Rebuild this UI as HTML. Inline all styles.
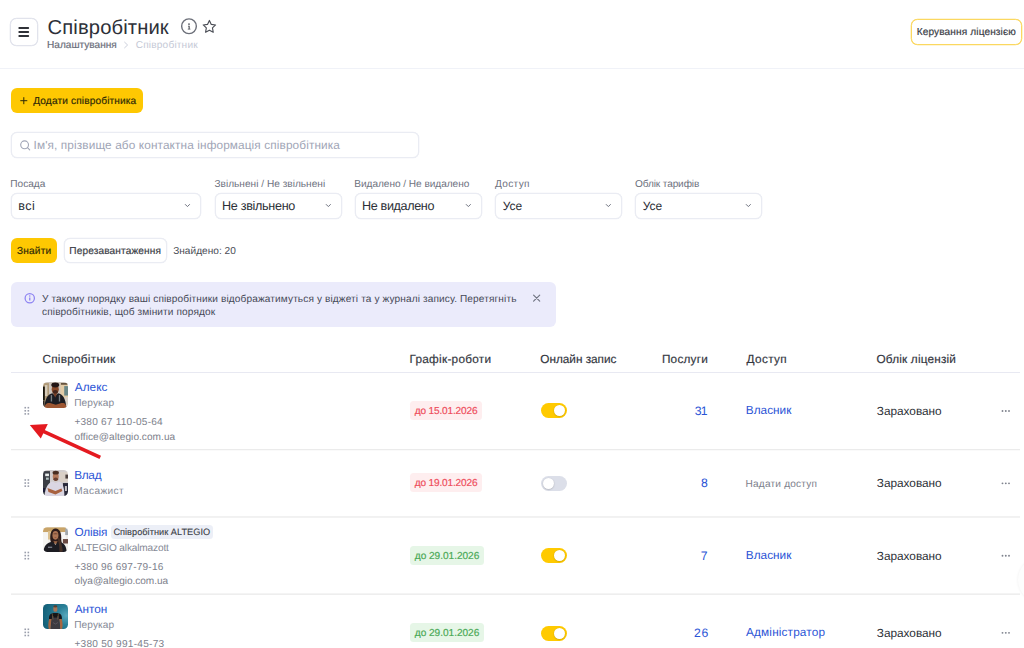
<!DOCTYPE html>
<html lang="uk"><head><meta charset="utf-8"><title>Співробітник</title>
<style>
*{box-sizing:border-box;margin:0;padding:0}
html,body{width:1024px;height:648px;overflow:hidden;background:#fff}
body{font-family:"Liberation Sans",sans-serif;text-rendering:geometricPrecision;color:#2c2f36;position:relative}
.a{position:absolute}
.t{position:absolute;white-space:nowrap;line-height:20px}
.box{position:absolute;color:#eaecf3;border:1px solid currentColor;box-shadow:0 0 0 .3px currentColor;border-radius:6px;background:#fff}
.line{position:absolute;left:11px;width:1009px;height:1px;background:#e9eaf1}
.badge{position:absolute;left:410.3px;height:19.2px;border-radius:3.5px}
.red{background:#feeeef}.green{background:#e6f6e7}
.tog{position:absolute;left:541px;width:25.5px;height:15px;border-radius:7.5px}
.tog.on{background:#ffca00}.tog.off{background:#dcdfe9}
.tog i{position:absolute;top:1.95px;width:11.1px;height:11.1px;border-radius:50%;background:#fff;box-shadow:0 0.5px 1.5px rgba(0,0,0,.25)}
.tog.on i{left:12.65px}.tog.off i{left:1.5px}
.av{position:absolute;left:42.8px;width:25.4px;height:25.6px;border-radius:4.5px;overflow:hidden}
.av svg{display:block}
</style></head><body>
<!-- header -->
<div class="box" style="left:10px;top:18px;width:28px;height:28px;color:#e1e3ec;border-radius:6.5px"></div>
<svg class="a" style="left:10px;top:18px" width="28" height="28" viewBox="0 0 28 28"><g fill="#2f3137"><rect x="8.4" y="9.05" width="10.7" height="1.9" rx=".8"/><rect x="8.4" y="13.05" width="10.7" height="1.9" rx=".8"/><rect x="8.4" y="17.05" width="10.7" height="1.9" rx=".8"/></g></svg>
<svg class="a" style="left:178px;top:16px" width="44" height="22" viewBox="178 16 44 22"><circle cx="189" cy="26.25" r="7.35" fill="none" stroke="#6c6f79" stroke-width="1.4"/><path d="M188 25.7h1.7v3h.7v.8h-2.6v-.8h.8v-2.2h-.6z" fill="#4a4d55"/><circle cx="189" cy="24.1" r=".85" fill="#4a4d55"/><path d="M209.4 20.4l1.9 4 4.3.55-3.15 3 .8 4.3-3.85-2.1-3.85 2.1.8-4.3-3.15-3 4.3-.55z" fill="none" stroke="#4a4d55" stroke-width="1.15" stroke-linejoin="round"/></svg>
<svg class="a" style="left:122px;top:40px" width="8" height="10" viewBox="0 0 8 10"><path d="M2.6 2.2L5.6 5 2.6 7.8" fill="none" stroke="#ccd0dc" stroke-width="1" stroke-linecap="round" stroke-linejoin="round"/></svg>
<div class="box" style="left:911px;top:19px;width:110.5px;height:25.5px;color:#fbd860;border-radius:6.5px"></div>
<div class="a" style="left:0;top:68px;width:1024px;height:1px;background:#f0f2f8"></div>

<!-- add button -->
<div class="a" style="left:11px;top:87.8px;width:132.3px;height:25.4px;border-radius:6px;background:#fec802"></div>
<svg class="a" style="left:19px;top:96px" width="10" height="10" viewBox="0 0 10 10"><path d="M4.8 1.6v6.2M1.7 4.7h6.2" stroke="#2e2a08" stroke-width="1" stroke-linecap="round"/></svg>

<!-- search -->
<div class="box" style="left:11px;top:132px;width:407.5px;height:25.8px"></div>
<svg class="a" style="left:18px;top:138px" width="14" height="14" viewBox="18 138 14 14"><circle cx="24.6" cy="144.8" r="3.9" fill="none" stroke="#a0a5b6" stroke-width="1.1"/><path d="M27.5 147.7l2.2 2.2" stroke="#a0a5b6" stroke-width="1.1" stroke-linecap="round"/></svg>

<!-- selects -->
<div class="box" style="left:11px;top:193.1px;width:190.4px;height:25.6px"></div>
<div class="box" style="left:215px;top:193.1px;width:127.3px;height:25.6px"></div>
<div class="box" style="left:355px;top:193.1px;width:127.3px;height:25.6px"></div>
<div class="box" style="left:495px;top:193.1px;width:127.3px;height:25.6px"></div>
<div class="box" style="left:635px;top:193.1px;width:127.3px;height:25.6px"></div>
<svg class="a" style="left:0;top:193px" width="1024" height="26" viewBox="0 193 1024 26"><g fill="none" stroke="#6f7380" stroke-width="1" stroke-linecap="round" stroke-linejoin="round"><path d="M185.35 204.5l2.1 2.1 2.1-2.1"/><path d="M326.25 204.5l2.1 2.1 2.1-2.1"/><path d="M466.25 204.5l2.1 2.1 2.1-2.1"/><path d="M606.25 204.5l2.1 2.1 2.1-2.1"/><path d="M746.25 204.5l2.1 2.1 2.1-2.1"/></g></svg>

<!-- buttons -->
<div class="a" style="left:11px;top:237.5px;width:46px;height:25.5px;border-radius:6px;background:#fec802"></div>
<div class="box" style="left:64px;top:237.5px;width:102.5px;height:25.5px"></div>

<!-- info -->
<div class="a" style="left:11px;top:282px;width:544.5px;height:44.8px;border-radius:6px;background:#ebebfb"></div>
<svg class="a" style="left:23px;top:292px" width="14" height="14" viewBox="23 292 14 14"><circle cx="29.75" cy="298.25" r="4.65" fill="none" stroke="#8d83f2" stroke-width="1.25"/><rect x="29.1" y="297.5" width="1.3" height="3" fill="#8d83f2"/><circle cx="29.75" cy="296" r=".75" fill="#8d83f2"/></svg>
<svg class="a" style="left:531px;top:293px" width="12" height="12" viewBox="531 293 12 12"><path d="M533.6 295.1l6.1 6.1M539.7 295.1l-6.1 6.1" stroke="#6f7380" stroke-width="1.15" stroke-linecap="round"/></svg>

<!-- table lines -->
<div class="line" style="top:372px;background:#e8e9f2"></div>
<div class="line" style="top:449px;background:#ebebeb"></div><div class="line" style="top:450px;background:#fafafa"></div>
<div class="line" style="top:516px;background:#f1f1f1"></div><div class="line" style="top:517px;background:#f2f2f2"></div>
<div class="line" style="top:593px;background:#f4f4f4"></div><div class="line" style="top:594px;background:#eeeeee"></div>

<!-- badges / toggles -->
<div class="badge red" style="top:401.25px;width:72.2px"></div>
<div class="badge red" style="top:473.3px;width:71.8px"></div>
<div class="badge green" style="top:545.7px;width:74.1px"></div>
<div class="badge green" style="top:623px;width:74.1px"></div>
<div class="tog on" style="top:403.1px"><i></i></div>
<div class="tog off" style="top:475.9px"><i></i></div>
<div class="tog on" style="top:548.3px"><i></i></div>
<div class="tog on" style="top:625.65px"><i></i></div>
<!-- tag -->
<div class="a" style="left:110.6px;top:524.7px;width:102.4px;height:14.3px;border-radius:3.5px;background:#eceff7"></div>

<!-- dots & grips -->
<svg class="a" style="left:0;top:370px" width="1024" height="278" viewBox="0 370 1024 278">
<g fill="#7f838e"><g id="d3"><circle cx="1002.5" cy="410.95" r=".95"/><circle cx="1005.8" cy="410.95" r=".95"/><circle cx="1009" cy="410.95" r=".95"/></g><use href="#d3" y="72.4"/><use href="#d3" y="144.8"/><use href="#d3" y="221.9"/></g>
<g fill="#9a9eab"><g id="gr"><rect x="24.45" y="406.90" width="1.6" height="1.6"/><rect x="27.55" y="406.90" width="1.6" height="1.6"/><rect x="24.45" y="410.00" width="1.6" height="1.6"/><rect x="27.55" y="410.00" width="1.6" height="1.6"/><rect x="24.45" y="413.10" width="1.6" height="1.6"/><rect x="27.55" y="413.10" width="1.6" height="1.6"/></g><use href="#gr" y="72.25"/><use href="#gr" y="144.8"/><use href="#gr" y="221.6"/></g>
<!-- arrow -->
<path d="M29.8 425.1L47.8 424.1L40.8 438.4Z" fill="#e41a20"/>
<path d="M43.6 429.6L101.0 455.7L99.5 458.9L42.1 432.8Z" fill="#e41a20"/>
</svg>

<!-- avatars -->
<div class="av" style="top:382.3px"><svg width="25.4" height="25.6" viewBox="0 0 25.5 25.5"><defs><filter id="bl" x="-10%" y="-10%" width="120%" height="120%"><feGaussianBlur stdDeviation="0.55"/></filter></defs><g filter="url(#bl)"><rect x="-3" y="-3" width="32" height="32" fill="#cdc5bd"/><rect x="-3" y="1" width="9" height="27" fill="#b09a78"/><rect x="-3" y="4.500" width="4.800" height="14" fill="#17140f"/><rect x="2" y="3" width="2.400" height="11" fill="#d6ccba"/><rect x="-3" y="19" width="4.500" height="8" fill="#2a2420"/><rect x="17.500" y="1.500" width="11" height="15" fill="#e2cba6"/><rect x="21.300" y="4" width="6" height="9.500" fill="#6b8888"/><rect x="18" y="1" width="9" height="1.600" fill="#5a4632"/><rect x="22" y="15" width="6" height="12" fill="#d8d0c6"/><ellipse cx="12.300" cy="7.200" rx="3.600" ry="4.700" fill="#87492c"/><ellipse cx="12.300" cy="2.800" rx="4" ry="2.500" fill="#231915"/><ellipse cx="12.300" cy="10" rx="2.700" ry="2.100" fill="#45261a"/><path d="M1.500 26c.3-9.500 3.500-14 8-14.800l2.800 2.500 2.800-2.500c4.500.8 8 5.300 8.300 14.800z" fill="#1e1f24"/><path d="M10.300 11.500l2 4 2-4z" fill="#7a4128"/><rect x="7.800" y="13" width="1.300" height="6.500" fill="#777b82"/><rect x="15.900" y="13" width="1.300" height="6.500" fill="#777b82"/><path d="M1.500 27c0-4.500 2-6.300 5.500-6l5.800 1.800 5.800-1.800c3.500-.3 5 1.500 5 6z" fill="#9d5633"/></g></svg></div>
<div class="av" style="top:470.2px"><svg width="25.4" height="25.6" viewBox="0 0 25.5 25.5"><g filter="url(#bl)"><rect x="-2" y="-2" width="30" height="30" fill="#d2cdcd"/><rect x="-2" y="1" width="9" height="26" fill="#3a3e44"/><rect x="2.2" y="3.5" width="3.8" height="2.6" fill="#e8ebea"/><rect x="3" y="7.5" width="2.8" height="2.2" fill="#b5c4c4"/><rect x="-2" y="18" width="4" height="4" fill="#1c1e3a"/><rect x="17" y="2" width="10" height="10" fill="#d9cfc6"/><rect x="22.5" y="4.5" width="3" height="4" fill="#4a3e3c"/><rect x="20" y="13" width="6" height="13" fill="#2a2a3a"/><rect x="22" y="16" width="2" height="5" fill="#c9c6c8"/><ellipse cx="12.8" cy="6.5" rx="3" ry="4" fill="#b57a5c"/><ellipse cx="12.8" cy="2.6" rx="3.2" ry="1.9" fill="#4a2e22"/><ellipse cx="12.8" cy="9.2" rx="2.3" ry="1.7" fill="#6b4030"/><path d="M1.5 26c1-9 4-13.5 8-14.5l3.3 1.5 3.2-1.5c4 1 5.5 6 5.5 14.500z" fill="#dad6e2"/><path d="M4.500 18l8 3 6-2.500 1 2.500-7 3.500-7-2.500z" fill="#a8623f"/></g></svg></div>
<div class="av" style="top:526.8px"><svg width="25.4" height="25.6" viewBox="0 0 25.5 25.5"><g filter="url(#bl)"><rect x="-3" y="-3" width="32" height="32" fill="#f0ede8"/><rect x="-3" y="0.300" width="26" height="4.700" fill="#c9a468"/><rect x="5" y="4" width="2.800" height="8.500" fill="#dcc190"/><rect x="-3" y="5.200" width="8" height="16" fill="#f5f4f1"/><rect x="18.500" y="5" width="4.500" height="8" fill="#f7f6f4"/><rect x="22.300" y="1.500" width="5" height="6.500" fill="#a3a8ac"/><rect x="20" y="12" width="7" height="4.500" fill="#6b4a42"/><path d="M7.600 14.500c-1.200-8 .8-13 5-13.200 4.500.2 6.200 5 5.700 11.500l1.800 11.700h-4.600l-2.400-8.500-2.500 1z" fill="#2e1f1a"/><ellipse cx="12.500" cy="8.300" rx="3" ry="4.400" fill="#ad7555"/><ellipse cx="12.500" cy="6.700" rx="2.300" ry=".5" fill="#6a4030"/><ellipse cx="12.500" cy="10.600" rx="1.100" ry=".45" fill="#8a4a3a"/><path d="M.3 26c.2-6.500 3.200-10.300 8.700-11.300l3.600 3 3.400-3c5.500 1 7.700 4.800 7.900 11.300z" fill="#1b1c24"/><path d="M10.400 14.200l2.200 3.300 2.100-3.300z" fill="#a06a4a"/><path d="M15.600 10c2 3 3.800 8 4.300 14.500l-3.400.5c0-6-.8-10-1.800-13z" fill="#463028"/><rect x="5" y="19.700" width="4.200" height="1" fill="#9a9ea8"/></g></svg></div>
<div class="av" style="top:603.8px"><svg width="25.4" height="25.6" viewBox="0 0 25.5 25.5"><defs><radialGradient id="tg" cx="0.85" cy="0.45" r="0.9"><stop offset="0" stop-color="#5aa9bd"/><stop offset="0.35" stop-color="#2a7f97"/><stop offset="1" stop-color="#0f5a72"/></radialGradient></defs><g filter="url(#bl)"><rect x="-2" y="-2" width="30" height="30" fill="url(#tg)"/><ellipse cx="12.400" cy="4.800" rx="2.100" ry="3" fill="#a87658"/><ellipse cx="12.400" cy="2.300" rx="2" ry="1.100" fill="#5a4030"/><path d="M6 13.500c0-3 2-4.300 4.500-4.600h4c2.500.3 4.500 1.600 4.500 4.600v2h-2.500v10.500h-8v-10.500h-2.500z" fill="#17181c"/><path d="M6.200 15c-1 4-1.200 7-.2 10.500h1.800c-.3-4 .5-6.500 1-10.500z" fill="#a8653f"/><path d="M18.800 15c1 4 1.200 7 .2 10.500h-1.800c.3-4-.5-6.500-1-10.500z" fill="#a8653f"/><path d="M9.200 12h6.500l1 8 .5 6h-9.500l.5-6z" fill="#3e3a40"/><rect x="10.500" y="10.500" width="4" height="3" fill="#121316"/><path d="M9.300 9.500l.8 6M15.500 9.500l-.8 6" stroke="#8a6a3a" stroke-width=".6" fill="none"/><path d="M10 18.500l2.500 1.500 2.500-1.500" stroke="#6a666c" stroke-width=".6" fill="none"/></g></svg></div>

<!-- fab (mostly offscreen) -->
<div class="a fab" style="left:1018px;top:557px;width:46px;height:46px;border-radius:50%;background:#fdfdfd;box-shadow:0 0 3px rgba(0,0,0,.07)"></div>

<!-- text -->
<div class="t" id="t0" style="left:47.60px;top:18.00px;font-size:20.2px;letter-spacing:0.123px;color:#2d3038;">Співробітник</div>
<div class="t" id="t1" style="left:47.04px;top:36.00px;font-size:10.1px;letter-spacing:0.001px;color:#6a6e7a;-webkit-text-stroke:0.18px #6a6e7a;">Налаштування</div>
<div class="t" id="t2" style="left:135.73px;top:36.00px;font-size:10.1px;letter-spacing:0.185px;color:#c5c9d6;">Співробітник</div>
<div class="t" id="t3" style="left:916.74px;top:23.00px;font-size:10.1px;letter-spacing:0.120px;color:#3a3d46;-webkit-text-stroke:0.18px #3a3d46;">Керування ліцензією</div>
<div class="t" id="t4" style="left:33.20px;top:92.00px;font-size:10.1px;letter-spacing:0.153px;color:#2e2a08;-webkit-text-stroke:0.18px #2e2a08;">Додати співробітника</div>
<div class="t" id="t5" style="left:33.56px;top:135.00px;font-size:11.8px;letter-spacing:0.120px;color:#a0a5b6;">Ім'я, прізвище або контактна інформація співробітника</div>
<div class="t" id="t6" style="left:10.27px;top:175.00px;font-size:10.1px;letter-spacing:0.017px;color:#6e7280;">Посада</div>
<div class="t" id="t7" style="left:214.43px;top:175.00px;font-size:10.1px;letter-spacing:0.017px;color:#6e7280;">Звільнені / Не звільнені</div>
<div class="t" id="t8" style="left:354.24px;top:175.00px;font-size:10.1px;letter-spacing:-0.037px;color:#6e7280;">Видалено / Не видалено</div>
<div class="t" id="t9" style="left:495.10px;top:175.00px;font-size:10.1px;letter-spacing:0.299px;color:#6e7280;">Доступ</div>
<div class="t" id="t10" style="left:635.03px;top:175.00px;font-size:10.1px;letter-spacing:-0.129px;color:#6e7280;">Облік тарифів</div>
<div class="t" id="t11" style="left:18.20px;top:196.00px;font-size:12.6px;letter-spacing:0.497px;color:#2c2f36;">всі</div>
<div class="t" id="t12" style="left:222.10px;top:196.00px;font-size:12.6px;letter-spacing:-0.314px;color:#2c2f36;">Не звільнено</div>
<div class="t" id="t13" style="left:362.10px;top:196.00px;font-size:12.6px;letter-spacing:-0.369px;color:#2c2f36;">Не видалено</div>
<div class="t" id="t14" style="left:502.75px;top:196.00px;font-size:12.0px;letter-spacing:0.015px;color:#2c2f36;">Усе</div>
<div class="t" id="t15" style="left:642.75px;top:196.00px;font-size:12.0px;letter-spacing:0.015px;color:#2c2f36;">Усе</div>
<div class="t" id="t16" style="left:16.93px;top:242.00px;font-size:10.1px;letter-spacing:0.198px;color:#2e2a08;-webkit-text-stroke:0.18px #2e2a08;">Знайти</div>
<div class="t" id="t17" style="left:69.27px;top:242.00px;font-size:10.1px;letter-spacing:0.135px;color:#3a3d46;-webkit-text-stroke:0.18px #3a3d46;">Перезавантаження</div>
<div class="t" id="t18" style="left:173.18px;top:242.00px;font-size:10.1px;letter-spacing:0.014px;color:#4a4d56;">Знайдено: 20</div>
<div class="t" id="t19" style="left:41.96px;top:290.00px;font-size:10.1px;letter-spacing:0.118px;color:#464957;">У такому порядку ваші співробітники відображатимуться у віджеті та у журналі запису. Перетягніть</div>
<div class="t" id="t20" style="left:42.07px;top:303.00px;font-size:10.1px;letter-spacing:0.111px;color:#464957;">співробітників, щоб змінити порядок</div>
<div class="t" id="t21" style="left:42.39px;top:349.00px;font-size:11.8px;letter-spacing:0.257px;color:#34373f;-webkit-text-stroke:0.18px #34373f;">Співробітник</div>
<div class="t" id="t22" style="left:409.44px;top:349.00px;font-size:11.8px;letter-spacing:0.272px;color:#34373f;-webkit-text-stroke:0.18px #34373f;">Графік-роботи</div>
<div class="t" id="t23" style="left:540.32px;top:349.00px;font-size:11.8px;letter-spacing:-0.021px;color:#34373f;-webkit-text-stroke:0.18px #34373f;">Онлайн запис</div>
<div class="t" id="t24" style="left:661.89px;top:349.00px;font-size:11.8px;letter-spacing:0.231px;color:#34373f;-webkit-text-stroke:0.18px #34373f;">Послуги</div>
<div class="t" id="t25" style="left:746.53px;top:349.00px;font-size:11.8px;letter-spacing:0.351px;color:#34373f;-webkit-text-stroke:0.18px #34373f;">Доступ</div>
<div class="t" id="t26" style="left:876.42px;top:349.00px;font-size:11.8px;letter-spacing:0.181px;color:#34373f;-webkit-text-stroke:0.18px #34373f;">Облік ліцензій</div>
<div class="t" id="t27" style="left:74.77px;top:377.00px;font-size:11.8px;letter-spacing:0.042px;color:#2b54d6;">Алекс</div>
<div class="t" id="t28" style="left:74.27px;top:394.00px;font-size:10.1px;letter-spacing:0.099px;color:#868a96;">Перукар</div>
<div class="t" id="t29" style="left:74.39px;top:413.00px;font-size:10.1px;letter-spacing:0.218px;color:#7d818c;">+380 67 110-05-64</div>
<div class="t" id="t30" style="left:74.57px;top:428.00px;font-size:10.1px;letter-spacing:0.038px;color:#7d818c;">office@altegio.com.ua</div>
<div class="t" id="t31" style="left:414.77px;top:402.00px;font-size:10.1px;letter-spacing:-0.168px;color:#ee4d5c;-webkit-text-stroke:0.18px #ee4d5c;">до 15.01.2026</div>
<div class="t" id="t32" style="left:694.74px;top:401.00px;font-size:12.2px;letter-spacing:-0.700px;color:#2b54d6;">31</div>
<div class="t" id="t33" style="left:745.74px;top:400.00px;font-size:11.8px;letter-spacing:0.026px;color:#2b54d6;">Власник</div>
<div class="t" id="t34" style="left:876.86px;top:401.00px;font-size:11.8px;letter-spacing:-0.019px;color:#2c2f36;">Зараховано</div>
<div class="t" id="t35" style="left:74.14px;top:465.00px;font-size:11.8px;letter-spacing:-0.266px;color:#2b54d6;">Влад</div>
<div class="t" id="t36" style="left:74.24px;top:482.00px;font-size:10.1px;letter-spacing:0.352px;color:#868a96;">Масажист</div>
<div class="t" id="t37" style="left:414.77px;top:474.00px;font-size:10.1px;letter-spacing:-0.168px;color:#ee4d5c;-webkit-text-stroke:0.18px #ee4d5c;">до 19.01.2026</div>
<div class="t" id="t38" style="left:700.95px;top:473.00px;font-size:12.2px;letter-spacing:0.000px;color:#2b54d6;">8</div>
<div class="t" id="t39" style="left:745.54px;top:475.00px;font-size:10.1px;letter-spacing:0.196px;color:#7d818c;">Надати доступ</div>
<div class="t" id="t40" style="left:876.86px;top:473.00px;font-size:11.8px;letter-spacing:-0.019px;color:#2c2f36;">Зараховано</div>
<div class="t" id="t41" style="left:74.42px;top:522.00px;font-size:11.8px;letter-spacing:-0.154px;color:#2b54d6;">Олівія</div>
<div class="t" id="t42" style="left:113.38px;top:522.00px;font-size:9.2px;letter-spacing:0.030px;color:#3a3d45;-webkit-text-stroke:0.1px #3a3d45;">Співробітник ALTEGIO</div>
<div class="t" id="t43" style="left:74.74px;top:539.00px;font-size:10.1px;letter-spacing:-0.151px;color:#868a96;">ALTEGIO alkalmazott</div>
<div class="t" id="t44" style="left:74.39px;top:558.00px;font-size:10.1px;letter-spacing:0.214px;color:#7d818c;">+380 96 697-79-16</div>
<div class="t" id="t45" style="left:74.57px;top:572.00px;font-size:10.1px;letter-spacing:-0.047px;color:#7d818c;">olya@altegio.com.ua</div>
<div class="t" id="t46" style="left:414.77px;top:547.00px;font-size:10.1px;letter-spacing:-0.022px;color:#4aa956;-webkit-text-stroke:0.18px #4aa956;">до 29.01.2026</div>
<div class="t" id="t47" style="left:700.69px;top:546.00px;font-size:12.2px;letter-spacing:0.000px;color:#2b54d6;">7</div>
<div class="t" id="t48" style="left:745.74px;top:545.00px;font-size:11.8px;letter-spacing:0.026px;color:#2b54d6;">Власник</div>
<div class="t" id="t49" style="left:876.86px;top:546.00px;font-size:11.8px;letter-spacing:-0.019px;color:#2c2f36;">Зараховано</div>
<div class="t" id="t50" style="left:74.77px;top:599.00px;font-size:11.8px;letter-spacing:-0.061px;color:#2b54d6;">Антон</div>
<div class="t" id="t51" style="left:74.27px;top:616.00px;font-size:10.1px;letter-spacing:0.099px;color:#868a96;">Перукар</div>
<div class="t" id="t52" style="left:74.39px;top:635.00px;font-size:10.1px;letter-spacing:0.260px;color:#7d818c;">+380 50 991-45-73</div>
<div class="t" id="t53" style="left:414.77px;top:624.00px;font-size:10.1px;letter-spacing:-0.022px;color:#4aa956;-webkit-text-stroke:0.18px #4aa956;">до 29.01.2026</div>
<div class="t" id="t54" style="left:694.10px;top:623.00px;font-size:12.2px;letter-spacing:0.527px;color:#2b54d6;">26</div>
<div class="t" id="t55" style="left:746.07px;top:622.00px;font-size:11.8px;letter-spacing:0.145px;color:#2b54d6;">Адміністратор</div>
<div class="t" id="t56" style="left:876.86px;top:623.00px;font-size:11.8px;letter-spacing:-0.019px;color:#2c2f36;">Зараховано</div>
</body></html>
